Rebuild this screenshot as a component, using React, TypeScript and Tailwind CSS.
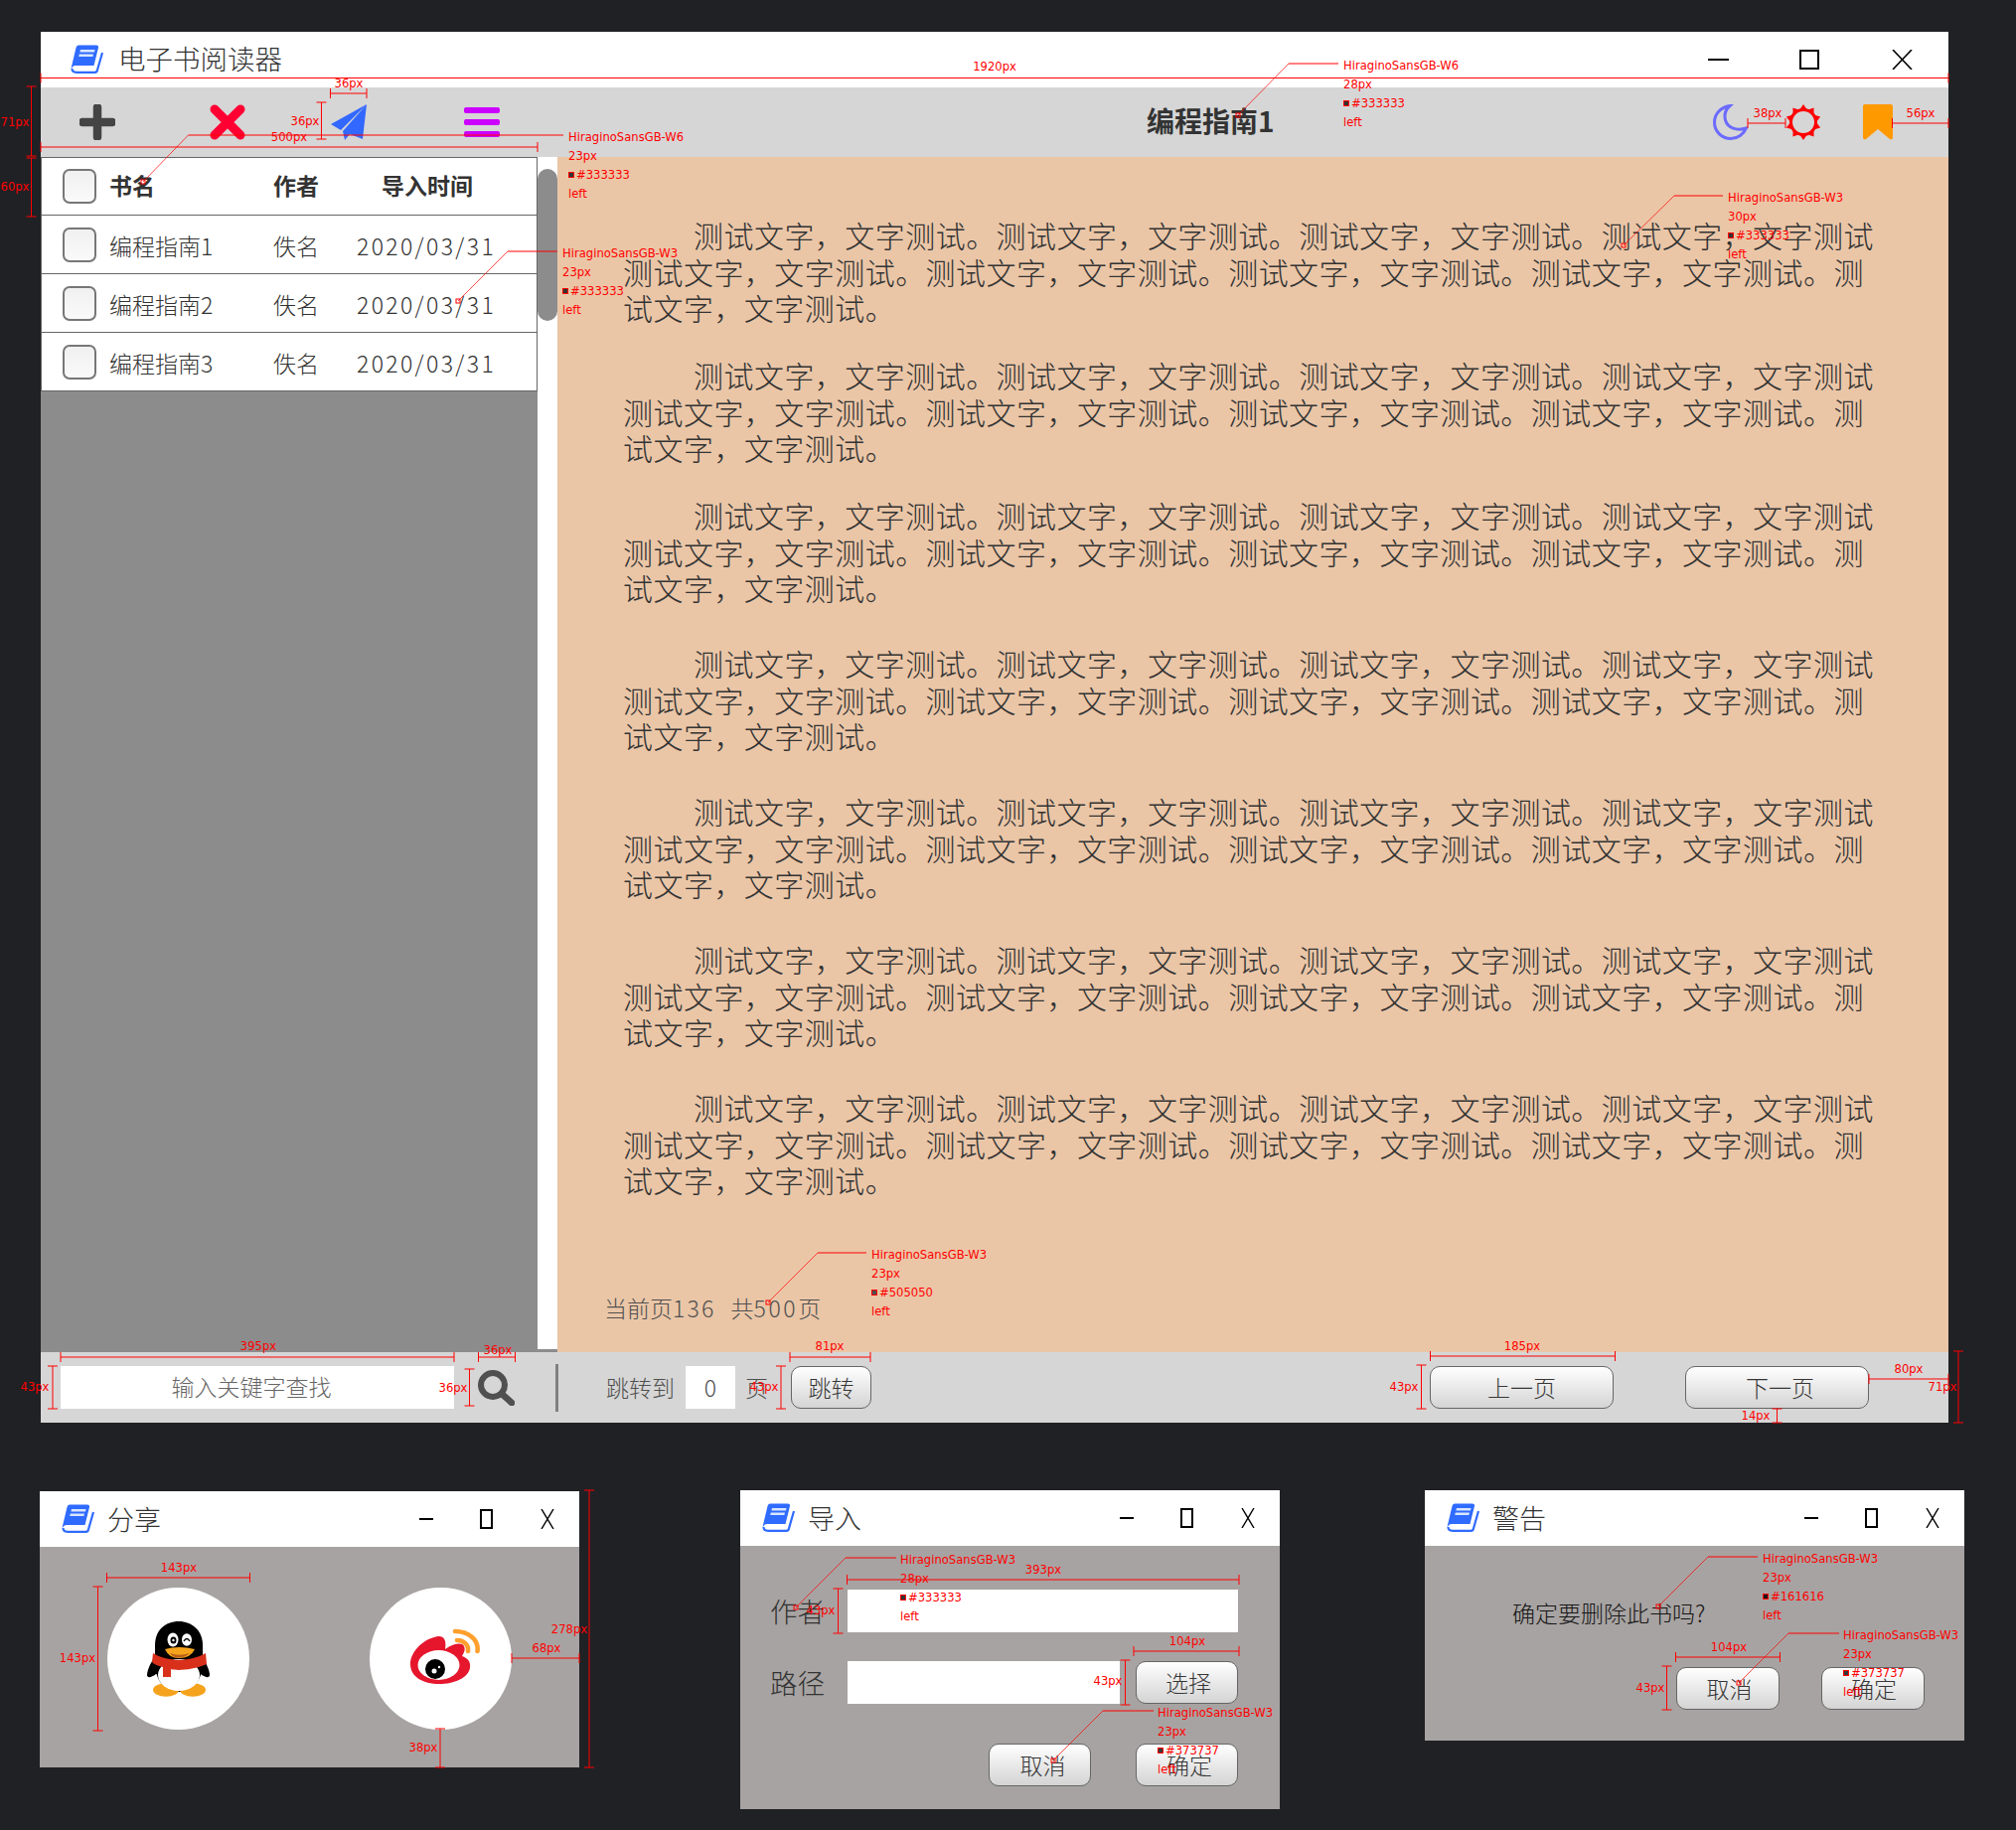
import type { ReactNode } from "react";

const BTN =
  "flex items-center justify-center rounded-[10px] border border-[#666666] bg-linear-to-b from-white to-[#d4d4d4] text-[23px] font-light text-[#373737]";

const GROUP = "测试文字\uFF0C文字测试\u3002";
const LINE_1 = GROUP.repeat(3) + "测试文字\uFF0C文字测试";
const LINE_2 = GROUP.repeat(4) + "测";
const LINE_3 = "试文字\uFF0C文字测试\u3002";

const PARAGRAPH_GAPS = ["", "mt-[31.5px]", "mt-[31.5px]", "mt-[39.5px]", "mt-[39.5px]", "mt-[39.5px]", "mt-[39.5px]"];

const BOOKS = [
  { name: "编程指南1", author: "佚名", date: "2020/03/31" },
  { name: "编程指南2", author: "佚名", date: "2020/03/31" },
  { name: "编程指南3", author: "佚名", date: "2020/03/31" },
];

// red measuring marks laid over the design
const hDim = (x1: number, x2: number, y: number) =>
  `M${x1} ${y}H${x2}M${x1} ${y - 5}V${y + 5}M${x2} ${y - 5}V${y + 5}`;
const vDim = (x: number, y1: number, y2: number) =>
  `M${x} ${y1}V${y2}M${x - 5} ${y1}H${x + 5}M${x - 5} ${y2}H${x + 5}`;

const DIM_PATHS = [
  hDim(41, 1961, 78.5),
  vDim(31.5, 87, 157),
  vDim(31.5, 159, 218),
  hDim(332.5, 369, 94),
  vDim(323.5, 103, 140),
  hDim(41, 541, 148),
  hDim(1759, 1797, 124),
  hDim(1904.5, 1961, 124),
  hDim(61, 457, 1366),
  hDim(481.5, 518.5, 1366),
  vDim(53, 1375, 1418),
  vDim(472.5, 1378, 1415),
  hDim(795, 876, 1366),
  vDim(786, 1375, 1418),
  hDim(1439.5, 1625.5, 1365),
  vDim(1430.5, 1374, 1418),
  hDim(1881, 1961, 1388),
  vDim(1971, 1360, 1432),
  vDim(1788.5, 1418, 1432),
  vDim(593, 1500, 1779),
  hDim(515, 583, 1669),
  vDim(443, 1740, 1779),
  hDim(107.5, 251.5, 1588),
  vDim(98.5, 1597, 1742),
  hDim(852.5, 1247, 1590),
  vDim(843.5, 1599, 1644),
  hDim(1141, 1247, 1662),
  vDim(1132.5, 1671, 1716),
  hDim(1686.5, 1791.5, 1668),
  vDim(1677.5, 1677, 1721),
];

const DIM_LABELS = [
  { t: "1920px", x: 1001, y: 68 },
  { t: "71px", x: 15, y: 124 },
  { t: "60px", x: 15, y: 189 },
  { t: "36px", x: 351, y: 85 },
  { t: "36px", x: 307, y: 123 },
  { t: "500px", x: 291, y: 139 },
  { t: "38px", x: 1779, y: 115 },
  { t: "56px", x: 1933, y: 115 },
  { t: "395px", x: 260, y: 1356 },
  { t: "36px", x: 501, y: 1360 },
  { t: "43px", x: 35, y: 1397 },
  { t: "36px", x: 456, y: 1398 },
  { t: "81px", x: 835, y: 1356 },
  { t: "43px", x: 769, y: 1397 },
  { t: "185px", x: 1532, y: 1356 },
  { t: "43px", x: 1413, y: 1397 },
  { t: "80px", x: 1921, y: 1379 },
  { t: "71px", x: 1955, y: 1397 },
  { t: "14px", x: 1767, y: 1426 },
  { t: "278px", x: 573, y: 1641 },
  { t: "68px", x: 550, y: 1660 },
  { t: "38px", x: 426, y: 1760 },
  { t: "143px", x: 180, y: 1579 },
  { t: "143px", x: 78, y: 1670 },
  { t: "393px", x: 1050, y: 1581 },
  { t: "43px", x: 826, y: 1622 },
  { t: "104px", x: 1195, y: 1653 },
  { t: "43px", x: 1115, y: 1693 },
  { t: "104px", x: 1740, y: 1659 },
  { t: "43px", x: 1661, y: 1700 },
];

const LEADERS = [
  { box: [144, 183], knee: [189.5, 136], end: 567, x: 572, y: 138, font: "W6", size: "23px", color: "#333333" },
  { box: [461, 303], knee: [511, 253], end: 561, x: 566, y: 255, font: "W3", size: "23px", color: "#333333" },
  { box: [1246, 116], knee: [1297, 64], end: 1347, x: 1352, y: 66, font: "W6", size: "28px", color: "#333333" },
  { box: [1634, 247], knee: [1685, 197], end: 1734, x: 1739, y: 199, font: "W3", size: "30px", color: "#333333" },
  { box: [773, 1311], knee: [823, 1261], end: 872, x: 877, y: 1263, font: "W3", size: "23px", color: "#505050" },
  { box: [801, 1618], knee: [851, 1568], end: 902, x: 906, y: 1570, font: "W3", size: "28px", color: "#333333" },
  { box: [1060, 1772], knee: [1110, 1722], end: 1161, x: 1165, y: 1724, font: "W3", size: "23px", color: "#373737" },
  { box: [1669, 1617], knee: [1719, 1567], end: 1769, x: 1774, y: 1569, font: "W3", size: "23px", color: "#161616" },
  { box: [1750, 1694], knee: [1800, 1644], end: 1851, x: 1855, y: 1646, font: "W3", size: "23px", color: "#373737" },
];

function Annotations() {
  return (
    <div className="pointer-events-none absolute inset-0 z-10 font-['DejaVu_Sans',sans-serif] text-[11.6px] text-[#ff0000]">
      <svg className="absolute inset-0" width="2029" height="1842" fill="none" stroke="#ff0000">
        {DIM_PATHS.map((d, i) => (
          <path key={i} d={d} strokeWidth="1" />
        ))}
        {LEADERS.map((l, i) => (
          <g key={i}>
            <rect x={l.box[0] - 2} y={l.box[1] - 2} width="4" height="4" strokeWidth="1" />
            <path d={`M${l.box[0]} ${l.box[1]}L${l.knee[0]} ${l.knee[1]}`} strokeWidth="0.7" />
            <path d={`M${l.knee[0]} ${l.knee[1]}H${l.end}`} strokeWidth="1" />
          </g>
        ))}
      </svg>
      {DIM_LABELS.map((l, i) => (
        <span
          key={i}
          className="absolute -translate-x-1/2 -translate-y-1/2 whitespace-nowrap"
          style={{ left: l.x, top: l.y }}
        >
          {l.t}
        </span>
      ))}
      {LEADERS.map((l, i) => (
        <div
          key={i}
          className="absolute flex flex-col whitespace-nowrap leading-[19px]"
          style={{ left: l.x, top: l.y - 9.5 }}
        >
          <span>HiraginoSansGB-{l.font}</span>
          <span>{l.size}</span>
          <span className="flex items-center gap-[2px]">
            <span className="h-[6px] w-[6px] border border-[#ff0000]" style={{ backgroundColor: l.color }} />
            {l.color}
          </span>
          <span>left</span>
        </div>
      ))}
    </div>
  );
}

function BookLogo() {
  return (
    <svg width="33" height="30" viewBox="0 0 33 30" className="shrink-0">
      <path d="M8 .5H26Q28.5 .5 28 3L23.5 21H5Q2.5 21 1.5 23L.5 24 5.5 3Q6 .5 8 .5Z" fill="#2f6bff" />
      <path d="M1.5 24Q1.5 27.8 6 27.8H24.5Q26.5 27.8 27 25.5L32 8" fill="none" stroke="#2f6bff" strokeWidth="2.2" />
      <path d="M10 5H24.5L24 7.4H9.4ZM8.8 9.5H23L22.4 12H8.2Z" fill="#d8e6ff" />
    </svg>
  );
}

function WindowControls({ big }: { big?: boolean }) {
  if (big) {
    return (
      <div className="ml-auto flex items-center pr-[36px]">
        <div className="h-[2px] w-[21px] bg-black" />
        <div className="ml-[71px] h-[20px] w-[20px] border-2 border-black" />
        <svg width="21" height="20" viewBox="0 0 21 20" className="ml-[73px]" stroke="#000" strokeWidth="1.6">
          <path d="M1 0L20 20M20 0L1 20" />
        </svg>
      </div>
    );
  }
  return (
    <div className="ml-auto flex items-center pr-[25px]">
      <div className="h-[2px] w-[14px] bg-black" />
      <div className="ml-[47px] h-[20px] w-[13px] border-2 border-black" />
      <svg width="14" height="20" viewBox="0 0 14 20" className="ml-[48px]" stroke="#000" strokeWidth="1.4">
        <path d="M1 0L13 20M13 0L1 20" />
      </svg>
    </div>
  );
}

function Checkbox() {
  return (
    <div className="h-[35px] w-[34px] shrink-0 rounded-[7px] border-2 border-[#777777] bg-linear-to-b from-[#f0f0f0] to-[#fafafa]" />
  );
}

function BookRow({ name, author, date }: { name: string; author: string; date: string }) {
  return (
    <div className="flex h-[59px] items-center border-x border-b border-[#666666] bg-white pl-[21px] text-[23px] font-light text-[#333333]">
      <Checkbox />
      <span className="ml-[13px] mt-[2px] w-[165px]">{name}</span>
      <span className="mt-[2px] w-[84px]">{author}</span>
      <span className="mt-[2px] tracking-[2.35px]">{date}</span>
    </div>
  );
}

function Paragraph({ className }: { className: string }) {
  return (
    <p className={`whitespace-nowrap text-[30px] font-light leading-[36.5px] tracking-[0.46px] text-[#333333] ${className}`}>
      <span className="block pl-[71px]">{LINE_1}</span>
      <span className="block">{LINE_2}</span>
      <span className="block">{LINE_3}</span>
    </p>
  );
}

function Toolbar() {
  return (
    <div className="flex h-[70px] items-center bg-[#d6d6d6] pl-[39px] pr-[56px]">
      <svg width="36" height="36" viewBox="0 0 36 36" className="shrink-0">
        <path d="M18 3V33M3 18H33" stroke="#444444" strokeWidth="8.5" strokeLinecap="round" />
      </svg>
      <svg width="36" height="36" viewBox="0 0 36 36" className="ml-[95px] shrink-0">
        <path d="M5 5L31 31M31 5L5 31" stroke="#ff0033" strokeWidth="9" strokeLinecap="round" />
      </svg>
      <svg width="36" height="36" viewBox="0 0 36 36" className="ml-[86px] shrink-0">
        <path d="M36 0L0 20 10 26ZM36 0L12 27 14 36 19 30 32 35Z" fill="#3268ff" />
      </svg>
      <div className="ml-[98px] flex h-[30px] w-[36px] flex-col justify-between">
        <div className="h-[6px] rounded-[2px] bg-[#cc00ff]" />
        <div className="h-[6px] rounded-[2px] bg-[#cc00ff]" />
        <div className="h-[6px] rounded-[2px] bg-[#cc00ff]" />
      </div>
      <span className="mb-[4px] ml-[651px] text-[28px] font-bold leading-none text-[#333333]">编程指南1</span>
      <svg width="35" height="36" viewBox="0 0 35 36" className="ml-auto shrink-0" fill="none">
        <path
          d="M17 1.5C7 3 1.5 10.5 1.5 18C1.5 27 8.5 34.5 18 34.5C25 34.5 31 30 33.5 24C24 27 15 24 12.5 16C11 10 13 5 17 1.5Z"
          stroke="#6b6bff"
          strokeWidth="3"
        />
      </svg>
      <svg width="36" height="36" viewBox="0 0 36 36" className="ml-[38px] shrink-0">
        {[0, 36, 72, 108, 144, 180, 216, 252, 288, 324].map((a) => (
          <path key={a} d="M13.5 6.5L18 0 22.5 6.5Z" fill="#ff0000" transform={`rotate(${a} 18 18)`} />
        ))}
        <circle cx="18" cy="18" r="12.5" fill="none" stroke="#ff0000" strokeWidth="3" />
      </svg>
      <svg width="30" height="36" viewBox="0 0 30 36" className="ml-[42px] shrink-0">
        <path d="M2 0H28Q30 0 30 2V33Q30 36.5 27 35L15 25 3 35Q0 36.5 0 33V2Q0 0 2 0Z" fill="#ff9900" />
      </svg>
    </div>
  );
}

function Sidebar() {
  return (
    <div className="flex w-[500px] shrink-0 flex-col bg-[#8c8c8c]">
      <div className="flex h-[59px] items-center border border-[#666666] bg-white pl-[21px] text-[23px] font-bold text-[#333333]">
        <Checkbox />
        <span className="mb-[2px] ml-[13px] w-[165px]">书名</span>
        <span className="mb-[2px] w-[109px]">作者</span>
        <span className="mb-[2px]">导入时间</span>
      </div>
      {BOOKS.map((b) => (
        <BookRow key={b.name} {...b} />
      ))}
    </div>
  );
}

function Article() {
  return (
    <div className="flex flex-1 flex-col justify-between bg-[#eac6a7] pb-[28px] pl-[66px] pt-[60px]">
      <div>
        {PARAGRAPH_GAPS.map((gap, i) => (
          <Paragraph key={i} className={gap} />
        ))}
      </div>
      <div className="-ml-[19px] text-[23px] font-light leading-[34px] text-[#505050]">
        当前页<span className="tracking-[2.2px]">136</span>
        <span className="ml-[15px]">共</span>
        <span className="tracking-[2.6px]">500</span>页
      </div>
    </div>
  );
}

function Footer() {
  return (
    <div className="flex h-[71px] items-center bg-[#d6d6d6] pl-[20px] pr-[80px] text-[23px] font-light text-[#505050]">
      <div className="flex h-[43px] w-[396px] items-center justify-center bg-white pb-[2px] pr-[12px] text-[#666666]">
        输入关键字查找
      </div>
      <svg width="37" height="36" viewBox="0 0 37 36" className="ml-[24px] shrink-0" fill="none" stroke="#505050">
        <circle cx="15" cy="15" r="12" strokeWidth="6" />
        <path d="M24 24L34 33" strokeWidth="6.5" strokeLinecap="round" />
      </svg>
      <div className="ml-[41px] h-[48px] w-[3px] bg-[#808080]" />
      <span className="ml-[48px]">跳转到</span>
      <div className="ml-[11px] flex h-[43px] w-[50px] items-center justify-center bg-white">0</div>
      <span className="ml-[10px]">页</span>
      <button className={`${BTN} ml-[23px] h-[43px] w-[81px]`}>跳转</button>
      <button className={`${BTN} ml-auto h-[43px] w-[185px]`}>上一页</button>
      <button className={`${BTN} ml-[72px] h-[43px] w-[185px] pl-[6px]`}>下一页</button>
    </div>
  );
}

function Dialog({ title, className, children }: { title: string; className: string; children: ReactNode }) {
  return (
    <div className={`flex w-[543px] shrink-0 flex-col bg-[#a7a3a2] ${className}`}>
      <div className="flex h-[56px] shrink-0 items-center bg-white pl-[22px]">
        <BookLogo />
        <span className="ml-[13px] text-[27px] font-light text-[#333333]">{title}</span>
        <WindowControls />
      </div>
      {children}
    </div>
  );
}

function QQPenguin() {
  return (
    <svg width="63" height="76" viewBox="0 0 63 76">
      <path d="M9 34C3 42 0 50 0 54C0 57 4 57 9 53L54 53C59 57 63 57 63 54C63 50 60 42 54 34Z" fill="#000" />
      <path d="M8 24C8 9 18 0 32 0C45 0 56 9 56 24C56 30 56 36 56 42C56 58 46 71 32 71C17 71 8 58 8 42C8 36 8 30 8 24Z" fill="#000" />
      <ellipse cx="19" cy="69" rx="13" ry="6.8" fill="#f5a31c" />
      <ellipse cx="46" cy="69" rx="13" ry="6.8" fill="#f5a31c" />
      <ellipse cx="32" cy="54" rx="21" ry="16" fill="#fff" />
      <path d="M6 32C20 41 44 41 59 32L60 43C46 49 30 50 24 48V56H16V46C12 45 8 44 5 41Z" fill="#d9301c" />
      <ellipse cx="26" cy="18.5" rx="5.5" ry="7" fill="#fff" />
      <ellipse cx="40" cy="18.5" rx="5" ry="6.2" fill="#fff" />
      <ellipse cx="26.5" cy="19" rx="3" ry="3.6" fill="#000" />
      <circle cx="26.5" cy="19" r="1.2" fill="#fff" />
      <path d="M37 20Q40 15 43 20" fill="none" stroke="#000" strokeWidth="1.4" />
      <path d="M18 28Q32 24 48 28Q44 37 32 37Q22 37 18 28Z" fill="#f5a31c" />
      <path d="M23 32Q32 35.5 43 32Q38 36.5 32 36.5Q26 36.5 23 32Z" fill="#b9601a" />
    </svg>
  );
}

function Weibo() {
  return (
    <svg width="70" height="56" viewBox="0 0 70 56" fill="none" className="mb-[5px] ml-[9px]">
      <path
        d="M0 36C0 24 12 12 24 9C32 6 37 10 35 21C44 15 52 14 54 18C56 22 53 26 52 28C58 30 61 34 60 40C58 50 44 56 29 56C13 56 0 49 0 36Z"
        fill="#e6162d"
      />
      <ellipse cx="28.5" cy="37" rx="21" ry="15" fill="#fff" />
      <circle cx="25" cy="41" r="10" fill="#000" />
      <circle cx="24" cy="43" r="2.5" fill="#fff" />
      <circle cx="29" cy="39" r="1.2" fill="#fff" />
      <path d="M45 3C58 3 69 11 67.5 23" stroke="#ff9f2e" strokeWidth="4.6" strokeLinecap="round" />
      <path d="M47 12C53 12 59 16 58 23" stroke="#ff9f2e" strokeWidth="4.6" strokeLinecap="round" />
    </svg>
  );
}

function ShareDialog() {
  return (
    <Dialog title="分享" className="mt-px h-[278px]">
      <div className="flex pl-[68px] pt-[41px]">
        <div className="flex h-[143px] w-[143px] items-center justify-center rounded-full bg-white">
          <QQPenguin />
        </div>
        <div className="ml-[121px] flex h-[143px] w-[143px] items-center justify-center rounded-full bg-white">
          <Weibo />
        </div>
      </div>
    </Dialog>
  );
}

function ImportDialog() {
  return (
    <Dialog title="导入" className="ml-[162px] h-[321px]">
      <div className="flex flex-col pl-[30px] pt-[44px] text-[27.5px] font-light text-[#333333]">
        <div className="flex h-[43px] items-center">
          <span className="w-[78px]">作者</span>
          <div className="h-[43px] w-[393px] bg-white" />
        </div>
        <div className="mt-[29px] flex h-[43px] items-center">
          <span className="w-[78px]">路径</span>
          <div className="h-[43px] w-[274px] bg-white" />
          <button className={`${BTN} ml-[16px] h-[43px] w-[103px] pl-[3px]`}>选择</button>
        </div>
        <div className="mt-[40px] flex justify-end pr-[42px]">
          <button className={`${BTN} h-[43px] w-[103px] pl-[6px]`}>取消</button>
          <button className={`${BTN} ml-[45px] h-[43px] w-[103px] pl-[5px]`}>确定</button>
        </div>
      </div>
    </Dialog>
  );
}

function WarningDialog() {
  return (
    <Dialog title="警告" className="ml-[146px] h-[252px]">
      <div className="flex flex-col">
        <p className="ml-[88px] mt-[50px] text-[23px] font-light leading-[34px] text-[#161616]">确定要删除此书吗?</p>
        <div className="mt-[38px] flex pl-[253px]">
          <button className={`${BTN} h-[43px] w-[104px] pl-[3px]`}>取消</button>
          <button className={`${BTN} ml-[42px] h-[43px] w-[104px] pl-[2px]`}>确定</button>
        </div>
      </div>
    </Dialog>
  );
}

export default function App() {
  return (
    <div className="relative h-[1842px] w-[2029px] overflow-hidden bg-[#202125] pl-[41px] pt-[32px] font-['Noto_Sans_CJK_SC','Liberation_Sans',sans-serif]">
      <div className="flex h-[1400px] w-[1920px] flex-col">
        <div className="flex h-[56px] shrink-0 items-center bg-white pl-[30px]">
          <BookLogo />
          <span className="mb-[2px] ml-[15px] text-[27.5px] font-light text-[#333333]">电子书阅读器</span>
          <WindowControls big />
        </div>
        <Toolbar />
        <div className="flex min-h-0 flex-1">
          <Sidebar />
          <div className="relative w-[20px] shrink-0 bg-white">
            <div className="mt-[12px] h-[153px] w-[20px] rounded-full bg-[#8c8c8c]" />
            <div className="absolute bottom-0 left-0 h-[3px] w-full bg-[#8c8c8c]" />
          </div>
          <Article />
        </div>
        <Footer />
      </div>
      <div className="-ml-px mt-[68px] flex items-start">
        <ShareDialog />
        <ImportDialog />
        <WarningDialog />
      </div>
      <Annotations />
    </div>
  );
}
